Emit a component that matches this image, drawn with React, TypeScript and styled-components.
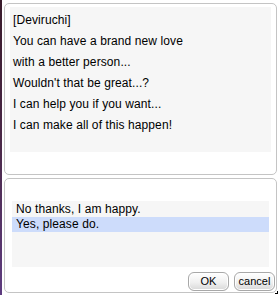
import React, { useState } from "react";
import styled, { createGlobalStyle } from "styled-components";

const GlobalStyle = createGlobalStyle`
  html, body {
    margin: 0;
    padding: 0;
    background: #ffffff;
  }
  body {
    font-family: "Liberation Sans", Arial, sans-serif;
    font-size: 12px;
    color: #000;
  }
`;

const dialogLines = [
  "[Deviruchi]",
  "You can have a brand new love",
  "with a better person...",
  "Wouldn't that be great...?",
  "I can help you if you want...",
  "I can make all of this happen!",
];

const choices = ["No thanks, I am happy.", "Yes, please do."];

export default function App() {
  const [selected, setSelected] = useState(1);

  return (
    <>
      <GlobalStyle />
      <Page>
        <Panel $height={172}>
          <MessageBox>
            {dialogLines.map((line) => (
              <Line key={line}>{line}</Line>
            ))}
          </MessageBox>
        </Panel>
        <Panel $height={115}>
          <ChoiceList>
            {choices.map((c, i) => (
              <Choice key={c} $active={i === selected} onClick={() => setSelected(i)}>
                {c}
              </Choice>
            ))}
          </ChoiceList>
          <ButtonRow>
            <Button>OK</Button>
            <Button>cancel</Button>
          </ButtonRow>
        </Panel>
        <Grip />
      </Page>
    </>
  );
}

const Page = styled.div`
  position: relative;
  width: 279px;
  height: 295px;
  box-sizing: border-box;
  border-left: 2px solid;
  border-image: linear-gradient(#3a1c2c, #4c2a4a 50%, #5e3c80) 1;
  padding: 3px 2px 0 2px;
  display: flex;
  flex-direction: column;
  gap: 3px;
`;

const Panel = styled.div<{ $height: number }>`
  height: ${(p) => p.$height}px;
  box-sizing: border-box;
  border: 1px solid #c4c4c4;
  border-radius: 5px;
  background: #fff;
  padding: 3px 5px 0 5px;
  display: flex;
  flex-direction: column;
`;

const MessageBox = styled.div`
  height: 142px;
  background: #f6f6f6;
  padding: 3px 3px 0;
`;

const Line = styled.div`
  line-height: 21px;
  letter-spacing: 0.1px;
  white-space: nowrap;
`;

const ChoiceList = styled.div`
  margin: 19px 2px 0;
  height: 66px;
  background: #f6f6f6;
  padding-top: 1px;
  box-sizing: border-box;
`;

const Choice = styled.div<{ $active: boolean }>`
  height: 15px;
  line-height: 15px;
  padding-left: 4px;
  letter-spacing: 0.1px;
  white-space: nowrap;
  background: ${(p) => (p.$active ? "#cddcfb" : "transparent")};
  cursor: default;
`;

const ButtonRow = styled.div`
  display: flex;
  justify-content: flex-end;
  gap: 5px;
  margin-top: 5px;
  margin-right: -4px;
`;

const Button = styled.button`
  flex: none;
  width: 41px;
  height: 19px;
  padding: 0;
  border: 1px solid #a8a8a8;
  border-radius: 6px;
  background: linear-gradient(#ffffff, #f0f0f0 55%, #d8d8d8);
  box-shadow: inset 0 0 0 1px #fff;
  font-family: "Liberation Sans", Arial, sans-serif;
  font-size: 11px;
  color: #000;
  line-height: 17px;
`;

const Grip = styled.div`
  position: absolute;
  right: 1px;
  bottom: 1px;
  width: 3px;
  height: 3px;
  border-right: 1px solid #000;
  border-bottom: 1px solid #000;
  box-sizing: border-box;
`;
